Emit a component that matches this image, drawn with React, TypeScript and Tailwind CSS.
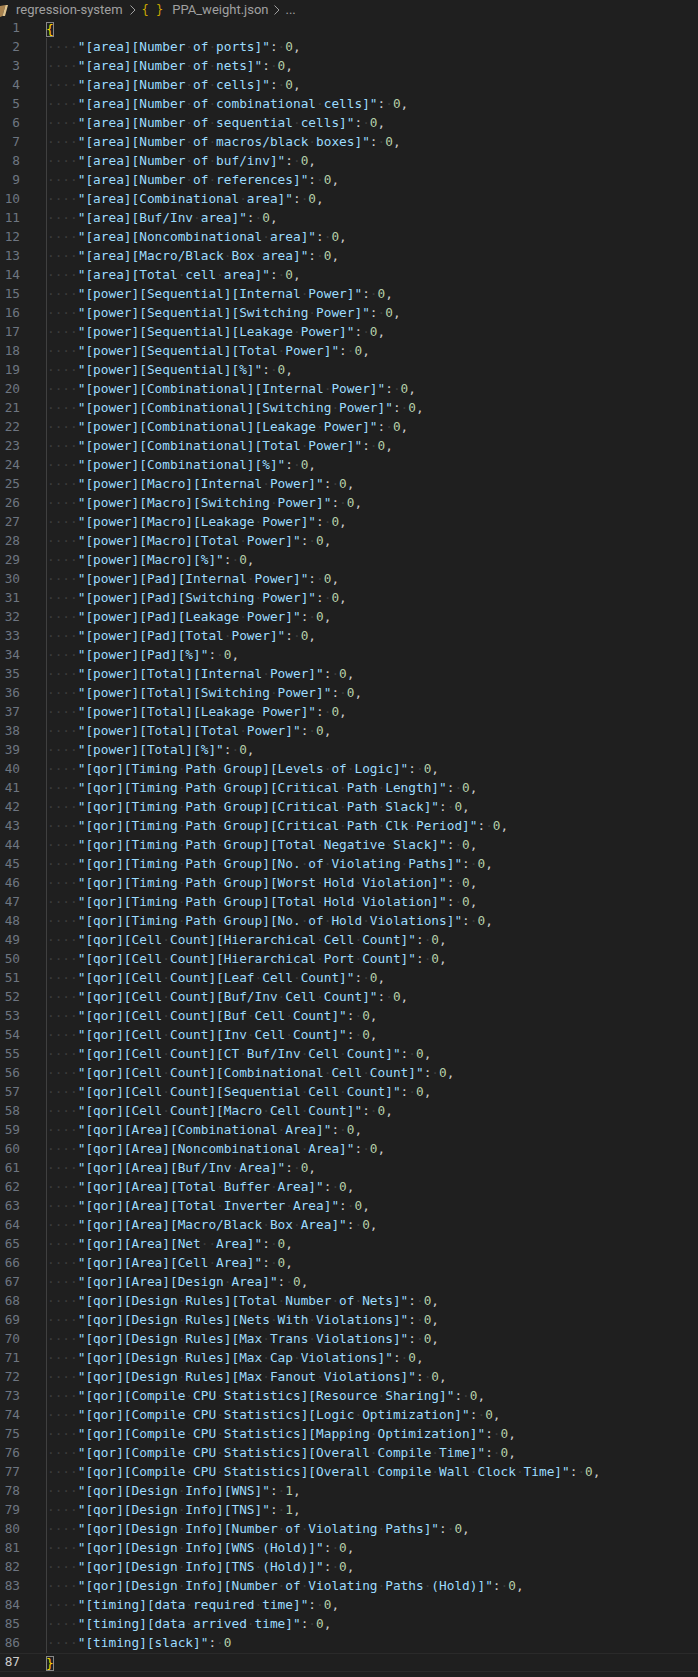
const keys = [
  "[area][Number of ports]",
  "[area][Number of nets]",
  "[area][Number of cells]",
  "[area][Number of combinational cells]",
  "[area][Number of sequential cells]",
  "[area][Number of macros/black boxes]",
  "[area][Number of buf/inv]",
  "[area][Number of references]",
  "[area][Combinational area]",
  "[area][Buf/Inv area]",
  "[area][Noncombinational area]",
  "[area][Macro/Black Box area]",
  "[area][Total cell area]",
  "[power][Sequential][Internal Power]",
  "[power][Sequential][Switching Power]",
  "[power][Sequential][Leakage Power]",
  "[power][Sequential][Total Power]",
  "[power][Sequential][%]",
  "[power][Combinational][Internal Power]",
  "[power][Combinational][Switching Power]",
  "[power][Combinational][Leakage Power]",
  "[power][Combinational][Total Power]",
  "[power][Combinational][%]",
  "[power][Macro][Internal Power]",
  "[power][Macro][Switching Power]",
  "[power][Macro][Leakage Power]",
  "[power][Macro][Total Power]",
  "[power][Macro][%]",
  "[power][Pad][Internal Power]",
  "[power][Pad][Switching Power]",
  "[power][Pad][Leakage Power]",
  "[power][Pad][Total Power]",
  "[power][Pad][%]",
  "[power][Total][Internal Power]",
  "[power][Total][Switching Power]",
  "[power][Total][Leakage Power]",
  "[power][Total][Total Power]",
  "[power][Total][%]",
  "[qor][Timing Path Group][Levels of Logic]",
  "[qor][Timing Path Group][Critical Path Length]",
  "[qor][Timing Path Group][Critical Path Slack]",
  "[qor][Timing Path Group][Critical Path Clk Period]",
  "[qor][Timing Path Group][Total Negative Slack]",
  "[qor][Timing Path Group][No. of Violating Paths]",
  "[qor][Timing Path Group][Worst Hold Violation]",
  "[qor][Timing Path Group][Total Hold Violation]",
  "[qor][Timing Path Group][No. of Hold Violations]",
  "[qor][Cell Count][Hierarchical Cell Count]",
  "[qor][Cell Count][Hierarchical Port Count]",
  "[qor][Cell Count][Leaf Cell Count]",
  "[qor][Cell Count][Buf/Inv Cell Count]",
  "[qor][Cell Count][Buf Cell Count]",
  "[qor][Cell Count][Inv Cell Count]",
  "[qor][Cell Count][CT Buf/Inv Cell Count]",
  "[qor][Cell Count][Combinational Cell Count]",
  "[qor][Cell Count][Sequential Cell Count]",
  "[qor][Cell Count][Macro Cell Count]",
  "[qor][Area][Combinational Area]",
  "[qor][Area][Noncombinational Area]",
  "[qor][Area][Buf/Inv Area]",
  "[qor][Area][Total Buffer Area]",
  "[qor][Area][Total Inverter Area]",
  "[qor][Area][Macro/Black Box Area]",
  "[qor][Area][Net  Area]",
  "[qor][Area][Cell Area]",
  "[qor][Area][Design Area]",
  "[qor][Design Rules][Total Number of Nets]",
  "[qor][Design Rules][Nets With Violations]",
  "[qor][Design Rules][Max Trans Violations]",
  "[qor][Design Rules][Max Cap Violations]",
  "[qor][Design Rules][Max Fanout Violations]",
  "[qor][Compile CPU Statistics][Resource Sharing]",
  "[qor][Compile CPU Statistics][Logic Optimization]",
  "[qor][Compile CPU Statistics][Mapping Optimization]",
  "[qor][Compile CPU Statistics][Overall Compile Time]",
  "[qor][Compile CPU Statistics][Overall Compile Wall Clock Time]",
  "[qor][Design Info][WNS]",
  "[qor][Design Info][TNS]",
  "[qor][Design Info][Number of Violating Paths]",
  "[qor][Design Info][WNS (Hold)]",
  "[qor][Design Info][TNS (Hold)]",
  "[qor][Design Info][Number of Violating Paths (Hold)]",
  "[timing][data required time]",
  "[timing][data arrived time]",
  "[timing][slack]",
];

function Dots({ count }: { count: number }) {
  return <span className="text-[#3c3c3c]">{"·".repeat(count)}</span>;
}

function Chevron() {
  return (
    <svg width="8" height="12" viewBox="0 0 8 12" fill="none" stroke="#a0a0a0" strokeWidth="1" className="shrink-0">
      <path d="M1.5 1.5 L6 6 L1.5 10.5" />
    </svg>
  );
}

function LineNo({ n, active }: { n: number; active?: boolean }) {
  return (
    <div className={`w-[20px] shrink-0 text-right ${active ? "text-[#cccccc]" : "text-[#6e7681]"}`}>
      {n}
    </div>
  );
}

function Bracket({ ch, className }: { ch: string; className: string }) {
  return (
    <span className={`box-border block h-[15px] w-[8px] border border-[#888888] leading-[12px] text-[#ffd700] ${className}`}>
      <span className="ml-[-1px]">{ch}</span>
    </span>
  );
}

function EntryRow({ n, k, last }: { n: number; k: string; last: boolean }) {
  const value = k === "[qor][Design Info][WNS]" || k === "[qor][Design Info][TNS]" ? "1" : "0";
  const parts = k.split(" ");
  return (
    <div className="flex h-[19px]">
      <LineNo n={n} />
      <div className="ml-[26px] whitespace-pre border-l border-[#404040]">
        <Dots count={4} />
        <span className="text-[#9cdcfe]">
          "
          {parts.map((p, i) => (
            <span key={i}>
              {i > 0 && <Dots count={1} />}
              {p}
            </span>
          ))}
          "
        </span>
        <span className="text-[#cccccc]">:</span>
        <Dots count={1} />
        <span className="text-[#b5cea8]">{value}</span>
        {!last && <span className="text-[#cccccc]">,</span>}
      </div>
    </div>
  );
}

export default function App() {
  return (
    <div className="h-[1677px] w-[698px] overflow-hidden bg-[#1f1f1f] font-['DejaVu_Sans_Mono',monospace] text-[12.77px] leading-[18px]">
      <div className="flex h-[19px] items-center whitespace-nowrap font-['Roboto',sans-serif] text-[13px] text-[#a0a0a0]">
        <svg width="8" height="13" viewBox="0 0 8 13" className="mr-[8px] mt-[1px] shrink-0">
          <path d="M0 2 L5.5 1 L2.5 12 L0 13 Z" fill="#a8824f" />
          <path d="M5.5 1 L8 1 L5 12 L2.5 12 Z" fill="#e0c48f" />
        </svg>
        <span>regression-system</span>
        <span className="ml-[6px] mr-[5px]">
          <Chevron />
        </span>
        <span className="mr-[9px] font-['DejaVu_Sans_Mono',monospace] text-[12px] text-[#cca700]">{"{ }"}</span>
        <span>PPA_weight.json</span>
        <span className="ml-[5px] mr-[4px]">
          <Chevron />
        </span>
        <span>...</span>
      </div>
      <div className="flex h-[19px]">
        <LineNo n={1} />
        <div className="ml-[26px]">
          <Bracket ch="{" className="mt-[3px]" />
        </div>
      </div>
      {keys.map((k, i) => (
        <EntryRow key={k} n={i + 2} k={k} last={i === keys.length - 1} />
      ))}
      <div className="flex h-[19px] border-y border-[#2a2a2a] leading-[16px]">
        <LineNo n={87} active />
        <div className="ml-[26px]">
          <Bracket ch="}" className="mt-[2px]" />
        </div>
      </div>
    </div>
  );
}
